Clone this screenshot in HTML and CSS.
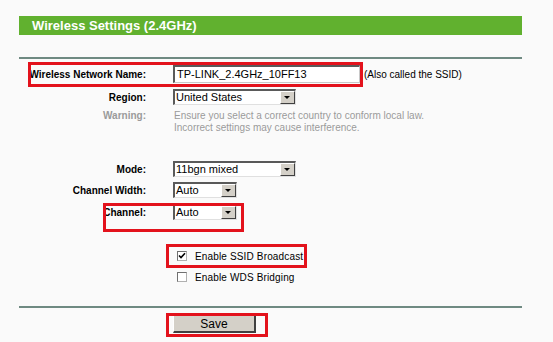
FILE: index.html
```html
<!DOCTYPE html>
<html lang="en">
<head>
  <meta charset="UTF-8">
  <title>Wireless Settings</title>
  <link rel="stylesheet" href="styles.css">
</head>
<body>
  <div class="panel">
    <div class="title">Wireless Settings (2.4GHz)</div>
    <div class="rule top-rule"></div>

    <div class="row row-ssid">
      <label class="label">Wireless Network Name:</label>
      <div class="field">
        <div class="text-input">TP-LINK_2.4GHz_10FF13</div>
        <span class="hint">(Also called the SSID)</span>
      </div>
    </div>

    <div class="row row-region">
      <label class="label">Region:</label>
      <div class="field">
        <div class="select wide">United States<span class="arrow"></span></div>
      </div>
    </div>

    <div class="row row-warning">
      <label class="label muted">Warning:</label>
      <div class="field warning-text">
        Ensure you select a correct country to conform local law.<br>
        Incorrect settings may cause interference.
      </div>
    </div>

    <div class="row row-mode">
      <label class="label">Mode:</label>
      <div class="field">
        <div class="select wide">11bgn mixed<span class="arrow"></span></div>
      </div>
    </div>

    <div class="row row-width">
      <label class="label">Channel Width:</label>
      <div class="field">
        <div class="select narrow">Auto<span class="arrow"></span></div>
      </div>
    </div>

    <div class="row row-channel">
      <label class="label">Channel:</label>
      <div class="field">
        <div class="select narrow">Auto<span class="arrow"></span></div>
      </div>
    </div>

    <div class="row row-check1">
      <span></span>
      <div class="field check">
        <span class="box">
          <svg width="8" height="8" viewBox="0 0 8 8"><path d="M1 3.5 L3 5.5 L7 1.2" fill="none" stroke="#000" stroke-width="1.6"/></svg>
        </span>
        Enable SSID Broadcast
      </div>
    </div>

    <div class="row row-check2">
      <span></span>
      <div class="field check">
        <span class="box"></span>
        Enable WDS Bridging
      </div>
    </div>

    <div class="rule bottom-rule"></div>

    <div class="row row-save">
      <span></span>
      <div class="field">
        <button class="btn">Save</button>
      </div>
    </div>
  </div>

  <!-- red annotation boxes drawn over the form -->
  <div class="mark mark-ssid"></div>
  <div class="mark mark-channel"></div>
  <div class="mark mark-broadcast"></div>
  <div class="mark mark-save"></div>
</body>
</html>
```

FILE: styles.css
```css
body {
  margin: 0;
  background-color: #fafafa;
  font-family: "Liberation Sans", Arial, sans-serif;
  position: relative;
  height: 342px;
  overflow: hidden;
}
.panel {
  margin: 16px 0 0 19px;
  width: 503px;
  display: flex;
  flex-direction: column;
}
.title {
  height: 19px;
  line-height: 20px;
  background-color: #61b12f;
  color: #fff;
  font-weight: bold;
  font-size: 13px;
  padding-left: 13px;
}
.rule {
  height: 0;
  border-top: 2px solid #6f8a82;
}
.top-rule {
  margin-top: 22px;
}
.bottom-rule {
  margin-top: 22px;
}
.row {
  display: grid;
  grid-template-columns: 127px 1fr;
  column-gap: 27px;
  align-items: center;
}
.label {
  text-align: right;
  white-space: nowrap;
  font-weight: bold;
  font-size: 10px;
  color: #000;
}
.muted {
  color: #9a9a9a;
}
.field {
  display: flex;
  align-items: center;
  font-size: 11px;
}
.row-ssid { margin-top: 6px; height: 18px; }
.row-region { margin-top: 6px; height: 16px; }
.row-warning { margin-top: 5px; height: 24px; align-items: start; }
.row-mode { margin-top: 27px; height: 16px; }
.row-width { margin-top: 5px; height: 16px; }
.row-channel { margin-top: 6px; height: 16px; }
.row-check1 { margin-top: 29px; height: 14px; }
.row-check2 { margin-top: 7px; height: 14px; }
.row-save { margin-top: 7px; height: 18px; }

.row-warning .label {
  line-height: 12px;
}
.text-input {
  width: 187px;
  height: 18px;
  box-sizing: border-box;
  background: #fff;
  border: 1px solid #c8c8c8;
  border-top: 2px solid #5a5a5a;
  border-left: 2px solid #5a5a5a;
  padding-left: 2px;
  line-height: 15px;
  font-size: 11px;
}
.hint {
  font-size: 10px;
  margin-left: 4px;
}
.warning-text {
  display: block;
  font-size: 10px;
  line-height: 12px;
  color: #9a9a9a;
  padding-left: 1px;
}
.select {
  position: relative;
  height: 16px;
  box-sizing: border-box;
  background: #fff;
  border: 1px solid #e0e0e0;
  border-top: 2px solid #5a5a5a;
  border-left: 2px solid #5a5a5a;
  padding-left: 1px;
  line-height: 13px;
  font-size: 11px;
}
.wide { width: 123px; }
.narrow { width: 64px; }
.arrow {
  position: absolute;
  right: 0;
  top: 0;
  width: 15px;
  height: 13px;
  box-sizing: border-box;
  background: #d4d0c8;
  border: 1px solid #fff;
  border-right-color: #404040;
  border-bottom-color: #404040;
}
.arrow::after {
  content: "";
  position: absolute;
  left: 3px;
  top: 4px;
  border-left: 3px solid transparent;
  border-right: 3px solid transparent;
  border-top: 3px solid #000;
}
.check {
  font-size: 10px;
  letter-spacing: 0.15px;
  padding-left: 4px;
}
.box {
  width: 10px;
  height: 10px;
  box-sizing: border-box;
  border: 1px solid #b0b0b0;
  border-top-color: #707070;
  border-left-color: #707070;
  background: #fff;
  margin-right: 8px;
  display: inline-flex;
  align-items: center;
  justify-content: center;
}
.btn {
  width: 83px;
  height: 18px;
  padding: 0;
  background: #d4d0c8;
  border: 1px solid #fff;
  border-right: 2px solid #404040;
  border-bottom: 2px solid #404040;
  font-family: "Liberation Sans", Arial, sans-serif;
  font-size: 12px;
  color: #000;
}
.mark {
  position: absolute;
  border: 3px solid #e3121c;
  box-sizing: border-box;
}
.mark-ssid { left: 28px; top: 62px; width: 335px; height: 25px; }
.mark-channel { left: 103px; top: 203px; width: 141px; height: 29px; }
.mark-broadcast { left: 166px; top: 244px; width: 141px; height: 24px; }
.mark-save { left: 166px; top: 313px; width: 102px; height: 24px; }
```
